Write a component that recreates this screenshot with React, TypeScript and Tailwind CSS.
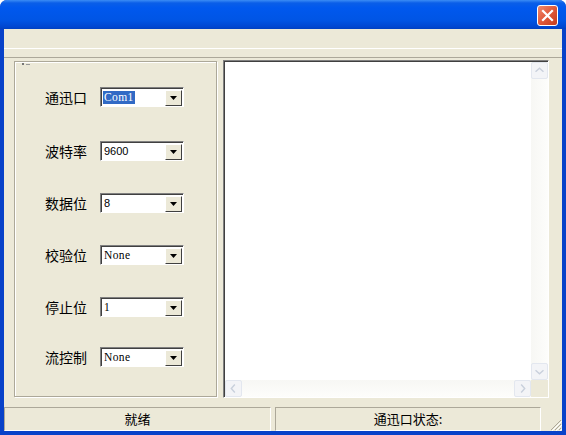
import React from "react";

const cjk = "font-['SimSun','Noto_Sans_CJK_SC',sans-serif]";

const fields = [
  { label: "通迅口", value: "Com1", selected: true, serif: true, mt: "mt-[25px]" },
  { label: "波特率", value: "9600", selected: false, serif: false, mt: "mt-[34px]" },
  { label: "数据位", value: "8", selected: false, serif: false, mt: "mt-[32px]" },
  { label: "校验位", value: "None", selected: false, serif: true, mt: "mt-[32px]" },
  { label: "停止位", value: "1", selected: false, serif: true, mt: "mt-[32px]" },
  { label: "流控制", value: "None", selected: false, serif: true, mt: "mt-[30px]" },
];

function Combo({ value, selected, serif }: { value: string; selected: boolean; serif: boolean }) {
  return (
    <div className="w-[84px] h-[20px] flex border-t border-l border-t-[#808080] border-l-[#808080] border-b border-r border-b-white border-r-white">
      <div className="flex-1 flex border-t border-l border-[#404040] bg-white">
        <div className="flex-1 flex items-center pl-[1px]">
          <span
            className={`leading-[13px] px-[1px] ${
              serif
                ? "font-['Liberation_Serif',serif] text-[11.5px] tracking-[0.4px]"
                : "font-['Liberation_Sans',sans-serif] text-[11px]"
            } ${selected ? "bg-[#316ac5] text-white" : "text-black"}`}
          >
            {value}
          </span>
        </div>
        <div className="w-[17px] h-[16px] mt-[1px] mr-[1px] bg-[#ece9d8] border-t border-l border-white border-b border-r border-b-[#404040] border-r-[#404040] flex items-center justify-center">
          <svg width="7" height="4" viewBox="0 0 7 4">
            <path d="M0 0h7L3.5 4z" fill="#000" />
          </svg>
        </div>
      </div>
    </div>
  );
}

function ArrowBtn({ dir }: { dir: "up" | "down" | "left" | "right" }) {
  const paths = {
    up: "M4 10l4.5-4 4.5 4",
    down: "M4 7l4.5 4 4.5-4",
    left: "M10 4l-4 4.5 4 4.5",
    right: "M7 4l4 4.5-4 4.5",
  };
  return (
    <div className="w-[17px] h-[17px] shrink-0 rounded-[2px] border border-[#e3e7ef] bg-[#f3f4f7] flex items-center justify-center">
      <svg width="17" height="17" viewBox="0 0 17 17">
        <path d={paths[dir]} fill="none" stroke="#c9d0dc" strokeWidth="1.6" />
      </svg>
    </div>
  );
}

export default function App() {
  return (
    <div className="w-[566px] h-[435px] flex flex-col bg-[#0842c9] rounded-t-[7px] overflow-hidden">
      {/* title bar */}
      <div className="h-[29px] shrink-0 flex items-center justify-end pr-[8px] bg-[linear-gradient(to_bottom,#3b8cf5_0px,#0a5ee8_3px,#0058ee_8px,#0055e5_20px,#0046d0_27px,#0040c0_29px)]">
        <div className="w-[21px] h-[21px] mt-[1px] rounded-[3px] border border-white bg-[linear-gradient(135deg,#f08a6e,#e0593a_50%,#c43b1c)] flex items-center justify-center">
          <svg width="13" height="13" viewBox="0 0 13 13">
            <path d="M2 2l9 9M11 2l-9 9" stroke="#fff" strokeWidth="2.2" strokeLinecap="square" />
          </svg>
        </div>
      </div>

      {/* client area */}
      <div className="flex-1 flex flex-col ml-[4px] mr-[4px] mb-[4px] bg-[#ece9d8]">
        <div className="h-[20px] shrink-0 border-b border-white" />
        <div className="h-[9px] shrink-0 border-b border-b-[#aca899]" />

        <div className="flex pt-[3px]">
          {/* settings group */}
          <div className="relative ml-[10px] w-[203px] h-[336px] border border-[#aca899] shadow-[inset_1px_1px_0_#fff,1px_1px_0_#fff]">
            <div className="absolute left-[7px] top-[1px] flex gap-[2px]">
              <span className="w-[2px] h-[2px] bg-[#777]" />
              <span className="w-[4px] h-[1px] mt-[1px] bg-[#999]" />
            </div>
            {fields.map((f) => (
              <div key={f.label} className={`flex items-center h-[20px] ${f.mt}`}>
                <span className={`ml-[30px] w-[55px] text-[14px] leading-[16px] text-black ${cjk}`}>{f.label}</span>
                <Combo value={f.value} selected={f.selected} serif={f.serif} />
              </div>
            ))}
          </div>

          {/* output box */}
          <div className="ml-[6px] mt-[-1px] w-[326px] h-[338px] flex flex-col border-t border-l border-[#808080] border-b border-r border-b-white border-r-white">
            <div className="flex-1 flex flex-col border-t border-l border-[#404040] bg-white">
              <div className="flex-1 flex">
                <div className="flex-1" />
                <div className="w-[17px] flex flex-col bg-[linear-gradient(to_right,#f7f7f4,#fdfdfb)]">
                  <ArrowBtn dir="up" />
                  <div className="flex-1" />
                  <ArrowBtn dir="down" />
                </div>
              </div>
              <div className="h-[17px] flex">
                <div className="flex-1 flex bg-[linear-gradient(to_bottom,#f7f7f4,#fdfdfb)]">
                  <ArrowBtn dir="left" />
                  <div className="flex-1" />
                  <ArrowBtn dir="right" />
                </div>
                <div className="w-[17px] bg-[#ece9d8]" />
              </div>
            </div>
          </div>
        </div>

        {/* status bar */}
        <div className="mt-auto h-[27px] flex items-stretch pt-[3px]">
          <div className={`w-[267px] flex items-center justify-center border-t border-l border-[#aca899] border-b border-r border-b-white border-r-white text-[13px] text-black ${cjk}`}>
            就绪
          </div>
          <div className={`ml-[4px] w-[266px] flex items-center justify-center border-t border-l border-[#aca899] border-b border-r border-b-white border-r-white text-[13px] text-black ${cjk}`}>
            通迅口状态:
          </div>
          <div className="flex-1 flex items-end justify-end">
            <svg width="13" height="13" viewBox="0 0 13 13">
              <path d="M12 2L2 12M12 6L6 12M12 10L10 12" stroke="#aca899" strokeWidth="1" />
              <path d="M13 3L3 13M13 7L7 13M13 11L11 13" stroke="#fff" strokeWidth="1" />
            </svg>
          </div>
        </div>
      </div>
    </div>
  );
}
